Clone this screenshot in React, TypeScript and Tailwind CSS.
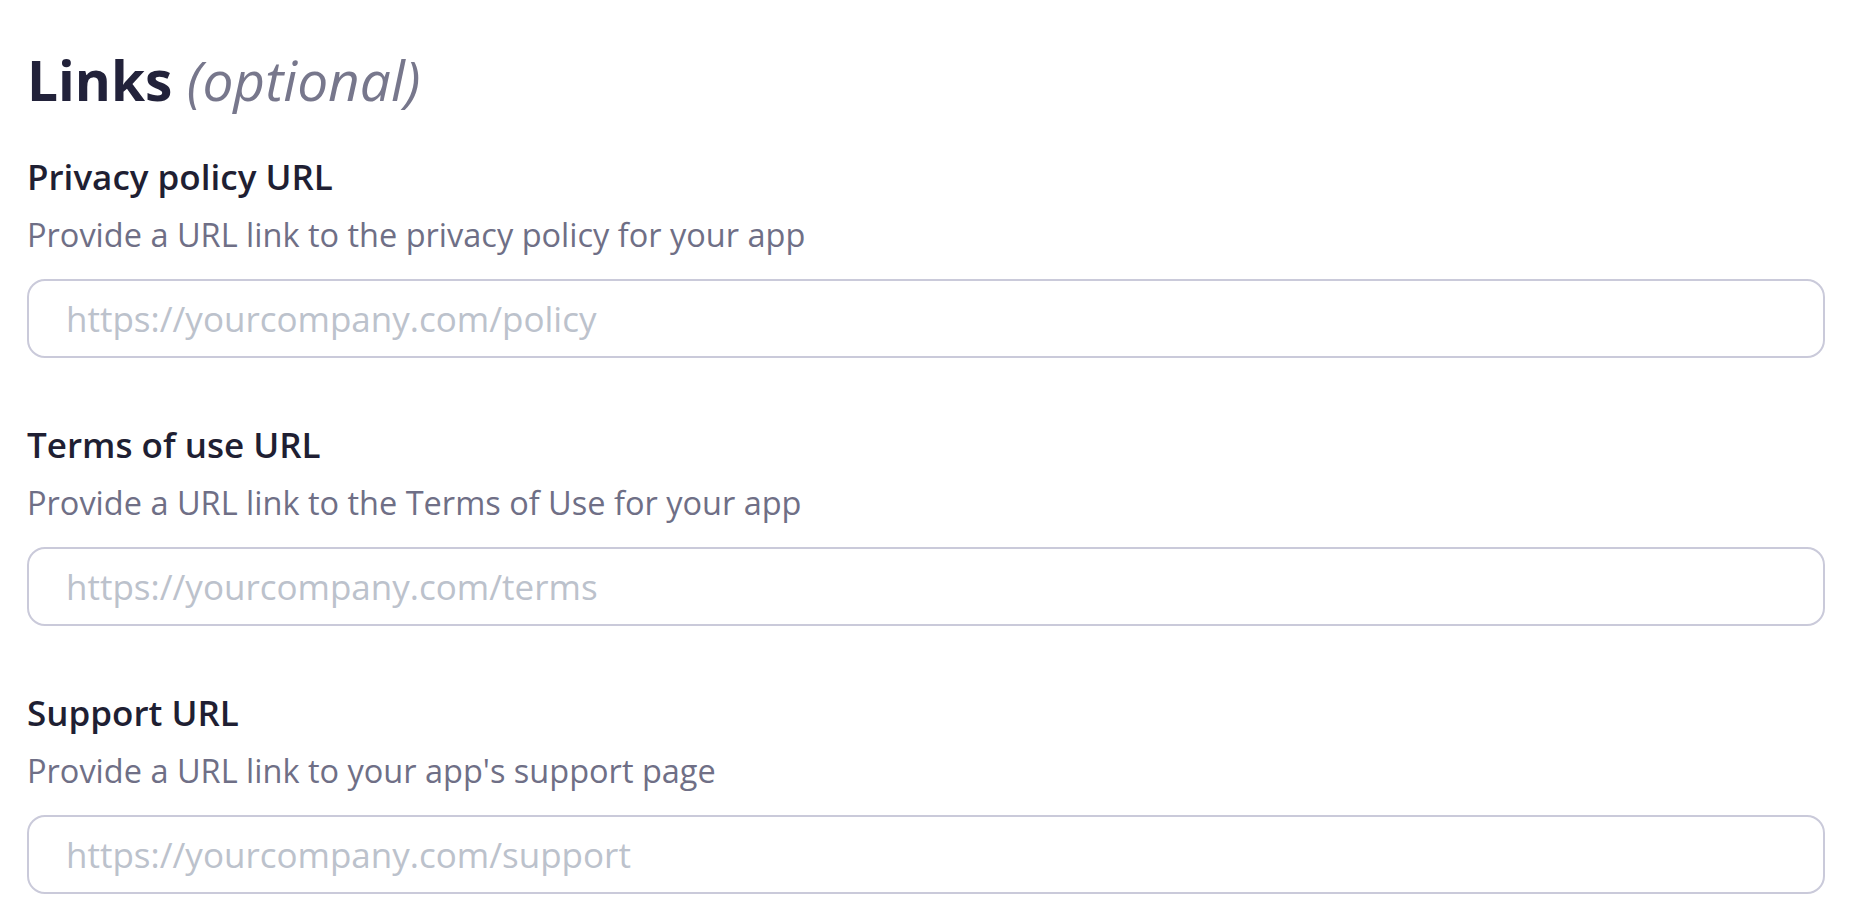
import React from 'react';

const fields = [
  {
    id: 'privacy',
    label: 'Privacy policy URL',
    hint: 'Provide a URL link to the privacy policy for your app',
    placeholder: 'https://yourcompany.com/policy',
  },
  {
    id: 'terms',
    label: 'Terms of use URL',
    hint: 'Provide a URL link to the Terms of Use for your app',
    placeholder: 'https://yourcompany.com/terms',
  },
  {
    id: 'support',
    label: 'Support URL',
    hint: "Provide a URL link to your app's support page",
    placeholder: 'https://yourcompany.com/support',
  },
];

export default function App() {
  return (
    <div
      className="min-h-screen bg-white px-[27px] pt-[42px]"
      style={{ fontFamily: '"Open Sans", "Noto Sans", sans-serif' }}
    >
      <h2 className="text-[55px] leading-[75px] font-bold text-[#22223a]">
        Links <span className="font-normal italic text-[#77778c]">(optional)</span>
      </h2>

      <div className="mt-[36px] flex flex-col gap-[63px]">
        {fields.map((field) => (
          <div key={field.id} className="flex flex-col">
            <label
              htmlFor={field.id}
              className="text-[35px] leading-[48px] font-semibold text-[#1f1f33]"
            >
              {field.label}
            </label>
            <p className="mt-[12px] text-[32.5px] leading-[44px] text-[#6f6f86]">{field.hint}</p>
            <input
              id={field.id}
              type="url"
              placeholder={field.placeholder}
              className="mt-[22px] h-[79px] w-full rounded-[18px] border-2 border-[#cacada] bg-white px-[37px] text-[35px] text-[#1f1f33] outline-none placeholder:text-[#bcc2cc]"
            />
          </div>
        ))}
      </div>
    </div>
  );
}
